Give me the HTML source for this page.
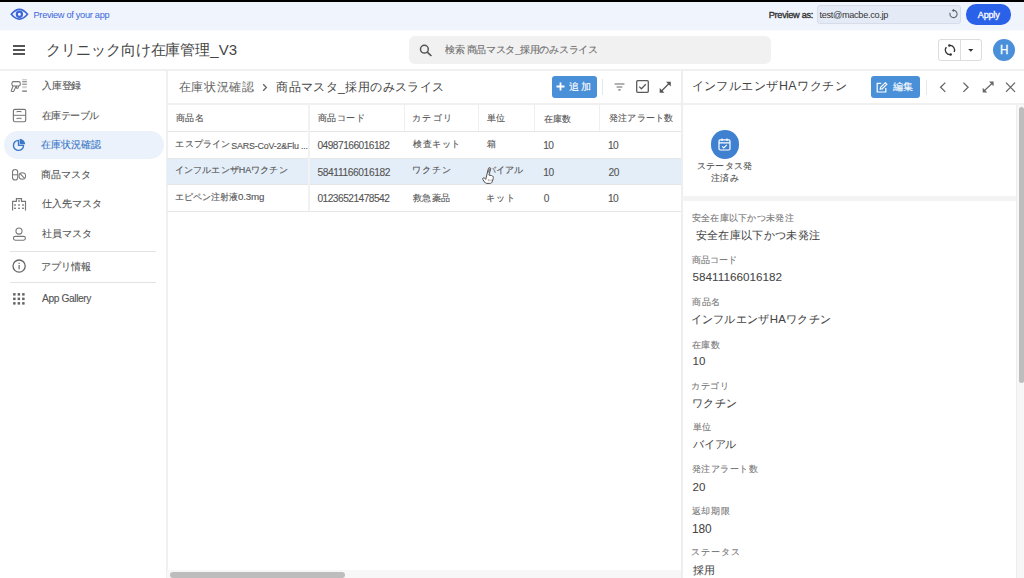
<!DOCTYPE html>
<html><head><meta charset="utf-8">
<style>
*{box-sizing:border-box;margin:0;padding:0}
html,body{width:1024px;height:578px;overflow:hidden;background:#fff;font-family:"Liberation Sans",sans-serif;color:#444}
.a{position:absolute;white-space:nowrap}
.t{position:absolute;white-space:nowrap;line-height:1.25}
.vl{position:absolute;width:1px;background:#efefef}
.hl{position:absolute;left:167px;width:514px;height:1px;background:#e6e6e6}
</style></head><body>
<!-- top preview bar -->
<div class="a" style="left:0;top:0;width:1024px;height:2px;background:#000"></div>
<div class="a" style="left:0;top:2px;width:1024px;height:28px;background:#eff4fd"></div><div class="a" style="left:0;top:30px;width:1024px;height:1px;background:#f8fafe"></div>
<svg class="a" style="left:10px;top:7.5px" width="19" height="13" viewBox="0 0 19 13"><path d="M1.3 6.3 Q9.4 -3.4 17.5 6.3 Q9.4 16 1.3 6.3 Z" fill="none" stroke="#3d66d9" stroke-width="1.75" stroke-linejoin="round"/><circle cx="9.4" cy="6.3" r="2.6" fill="none" stroke="#3d66d9" stroke-width="2.2"/></svg>
<div class="a" style="left:817px;top:5px;width:144px;height:19px;background:#e5ebf6;border:1px solid #d6dce8;border-radius:3px"></div>
<svg class="a" style="left:948px;top:8px" width="11" height="11" viewBox="0 0 11 11"><path d="M5.5 2.4 A3.6 3.6 0 1 1 2.12 4.77" fill="none" stroke="#666" stroke-width="1.1"/><path d="M3.6 2.4 L6 0.7 L6 4.1Z" fill="#666"/></svg>
<div class="a" style="left:966px;top:4px;width:45px;height:20.5px;background:#2962e8;border-radius:10px"></div>

<!-- app header -->
<div class="a" style="left:0;top:69px;width:1024px;height:2px;background:#f0f0f0"></div>
<div class="a" style="left:13px;top:45px;width:12px;height:1.6px;background:#555"></div>
<div class="a" style="left:13px;top:49px;width:12px;height:1.6px;background:#555"></div>
<div class="a" style="left:13px;top:53px;width:12px;height:1.6px;background:#555"></div>
<div class="a" style="left:409px;top:35.8px;width:362px;height:28.2px;background:#f1f1f1;border-radius:6px"></div>
<svg class="a" style="left:419px;top:44px" width="14" height="13" viewBox="0 0 14 13"><circle cx="5.4" cy="5.2" r="3.9" fill="none" stroke="#555" stroke-width="1.5"/><path d="M8.3 8.1 L12.4 12" stroke="#555" stroke-width="1.7"/></svg>
<div class="a" style="left:938px;top:39px;width:44px;height:22px;border:1px solid #dcdcdc;border-radius:3px"></div>
<div class="a" style="left:960px;top:39px;width:1px;height:22px;background:#dcdcdc"></div>
<svg class="a" style="left:942.5px;top:42.8px" width="14" height="14" viewBox="0 0 14 14"><path d="M6.36 2.44 A4.6 4.6 0 0 1 11.13 9.02" fill="none" stroke="#333" stroke-width="1.3"/><path d="M7.64 11.56 A4.6 4.6 0 0 1 3.33 4.23" fill="none" stroke="#333" stroke-width="1.3"/><circle cx="6.36" cy="2.44" r="1.25" fill="#333"/><circle cx="7.64" cy="11.56" r="1.25" fill="#333"/></svg>
<svg class="a" style="left:968px;top:48.8px" width="6" height="3" viewBox="0 0 6 3"><path d="M0.2 0 L5.4 0 L2.8 2.8Z" fill="#333"/></svg>
<div class="a" style="left:993.2px;top:38.8px;width:22.3px;height:22.3px;border-radius:50%;background:#4a8fd9"></div><div class="a" style="left:993.2px;top:38.9px;width:22.3px;height:22.3px;color:#fff;font-size:12.6px;text-align:center;line-height:22.3px;transform:scaleX(0.92);-webkit-text-stroke:0.3px #fff">H</div>

<!-- sidebar -->
<div class="a" style="left:166px;top:71px;width:2px;height:507px;background:#f0f0f0"></div>
<div class="a" style="left:4px;top:131.3px;width:160px;height:27.6px;border-radius:14px;background:#ebf2fb"></div>
<div class="a" style="left:10px;top:251px;width:146px;height:1px;background:#e3e3e3"></div>
<div class="a" style="left:10px;top:282px;width:146px;height:1px;background:#e3e3e3"></div>
<svg class="a" style="left:8px;top:76px" width="22" height="20" viewBox="0 0 22 20"><rect x="3.9" y="5.6" width="8.4" height="4.4" rx="1.7" fill="none" stroke="#777" stroke-width="1.1"/><path d="M5.1 10 L3.3 14.5 Q3.1 15.4 4 15.4 L5.6 15.4 L8.2 10 M8.4 10 V12 Q8.4 12.3 8.7 12.3 L10 12.3 L10.6 10" fill="none" stroke="#777" stroke-width="1.05" stroke-linejoin="round"/><g fill="#777"><rect x="14.2" y="3.1" width="4.7" height="0.9" opacity=".4"/><rect x="14.2" y="4.8" width="4.7" height="1.3" opacity=".75"/><rect x="14.2" y="6.6" width="4.7" height="0.8" opacity=".55"/><rect x="14.2" y="7.9" width="4.7" height="0.8"/><rect x="14.2" y="10" width="4.7" height="0.7" opacity=".4"/><rect x="14.2" y="11.3" width="4.7" height="0.8" opacity=".45"/><rect x="14.2" y="14.5" width="4.7" height="1.3"/></g></svg>
<svg class="a" style="left:8px;top:104px" width="22" height="22" viewBox="0 0 22 22"><rect x="5.4" y="5.4" width="12.3" height="12.3" rx="1.4" fill="none" stroke="#777" stroke-width="1.15"/><path d="M5.4 11.3 H17.7 M8.9 8.3 V7.5 H13.1 V8.3 M8.9 15.1 V14.3 H13.1 V15.1" fill="none" stroke="#777" stroke-width="1"/></svg>
<svg class="a" style="left:8px;top:134px" width="22" height="22" viewBox="0 0 22 22"><path d="M10.5 6.4 A5 5 0 1 0 15.5 11.4 L10.5 11.4 Z" fill="none" stroke="#3b78c8" stroke-width="1.4" stroke-linejoin="round"/><path d="M11.7 4.8 A5.5 5.5 0 0 1 17.2 10.3 L11.7 10.3 Z" fill="#3b78c8"/></svg>
<svg class="a" style="left:8px;top:164px" width="22" height="22" viewBox="0 0 22 22"><rect x="4.5" y="5.5" width="5.2" height="10.5" rx="2.6" fill="none" stroke="#777" stroke-width="1.05"/><path d="M4.5 10.8 H9.7" stroke="#777" stroke-width="1"/><circle cx="14.3" cy="12" r="3.3" fill="none" stroke="#777" stroke-width="1.05"/><path d="M12 9.7 L16.6 14.3" stroke="#777" stroke-width="1.05"/></svg>
<svg class="a" style="left:8px;top:194px" width="22" height="22" viewBox="0 0 22 22"><path d="M4.6 16.6 V7.4 H8.4 V4.6 H13.5 V7.4 H17.5 V16.6" fill="none" stroke="#777" stroke-width="1.15"/><g fill="#777"><rect x="6.1" y="10.3" width="1.8" height="1.4"/><rect x="10.1" y="10.3" width="1.8" height="1.4"/><rect x="14.1" y="10.3" width="1.8" height="1.4"/><rect x="6.1" y="13.6" width="1.8" height="1.4"/><rect x="10.1" y="13.6" width="1.8" height="1.4"/><rect x="14.1" y="13.6" width="1.8" height="1.4"/><rect x="10.1" y="6.3" width="1.8" height="1.4"/></g></svg>
<svg class="a" style="left:8px;top:222px" width="22" height="22" viewBox="0 0 22 22"><circle cx="11" cy="9.1" r="3.05" fill="none" stroke="#777" stroke-width="1.1"/><rect x="5.4" y="14.4" width="12" height="3.8" rx="1.9" fill="none" stroke="#777" stroke-width="1.1"/></svg>
<svg class="a" style="left:8px;top:255px" width="22" height="22" viewBox="0 0 22 22"><circle cx="11.1" cy="11.1" r="6.1" fill="none" stroke="#666" stroke-width="1.3"/><rect x="10.5" y="10" width="1.2" height="4.3" fill="#666"/><rect x="10.5" y="7.7" width="1.2" height="1.2" fill="#666"/></svg>
<svg class="a" style="left:8px;top:288px" width="22" height="22" viewBox="0 0 22 22"><g fill="#666"><rect x="5.1" y="5.1" width="2.5" height="2.5"/><rect x="9.6" y="5.1" width="2.5" height="2.5"/><rect x="14.1" y="5.1" width="2.5" height="2.5"/><rect x="5.1" y="9.6" width="2.5" height="2.5"/><rect x="9.6" y="9.6" width="2.5" height="2.5"/><rect x="14.1" y="9.6" width="2.5" height="2.5"/><rect x="5.1" y="14.1" width="2.5" height="2.5"/><rect x="9.6" y="14.1" width="2.5" height="2.5"/><rect x="14.1" y="14.1" width="2.5" height="2.5"/></g></svg>

<!-- table area -->
<svg class="a" style="left:262px;top:83px" width="6" height="9" viewBox="0 0 6 9"><path d="M1.2 1.3 L4.4 4.5 L1.2 7.7" fill="none" stroke="#666" stroke-width="1.3"/></svg>
<div class="a" style="left:552px;top:75.5px;width:44.5px;height:22.5px;background:#4a90d9;border-radius:3px"></div>
<svg class="a" style="left:556px;top:82px" width="9" height="9" viewBox="0 0 9 9"><path d="M4.5 0.5 V8.5 M0.5 4.5 H8.5" stroke="#fff" stroke-width="1.8"/></svg>
<div class="a" style="left:602px;top:79px;width:1px;height:16px;background:#e8e8e8"></div>
<svg class="a" style="left:614px;top:83px" width="11" height="8" viewBox="0 0 11 8"><path d="M0.6 1 H10.4 M2.6 4 H8.4 M4.4 6.8 H6.6" stroke="#666" stroke-width="1.15"/></svg>
<svg class="a" style="left:635.5px;top:80.3px" width="13" height="13" viewBox="0 0 13 13"><rect x="0.7" y="0.7" width="11.6" height="11.6" rx="1" fill="none" stroke="#5a5a5a" stroke-width="1.3"/><path d="M3.2 6.6 L5.4 8.8 L9.8 4.3" fill="none" stroke="#5a5a5a" stroke-width="1.3"/></svg>
<svg class="a" style="left:658.5px;top:80.5px" width="12.5" height="12.5" viewBox="0 0 12.5 12.5"><path d="M2 10.5 L10.5 2" stroke="#555" stroke-width="1.3"/><path d="M7 0.7 H11.8 V5.5Z M0.7 7 V11.8 H5.5Z" fill="#555"/></svg>
<div class="hl" style="top:103px;height:2px;background:#f0f0f0"></div>
<div class="hl" style="top:131px"></div>
<div class="a" style="left:167px;top:158px;width:514px;height:27px;background:#e4eef8"></div>
<div class="hl" style="top:158px"></div>
<div class="hl" style="top:184px"></div>
<div class="hl" style="top:211px"></div>
<div class="vl" style="left:308px;top:104px;width:2px;height:107px;background:#f2f2f2"></div>
<div class="vl" style="left:404px;top:104px;height:27px"></div>
<div class="vl" style="left:478px;top:104px;height:27px"></div>
<div class="vl" style="left:534px;top:104px;height:27px"></div>
<div class="vl" style="left:599px;top:104px;height:27px"></div>
<div class="a" style="left:167px;top:570px;width:514px;height:8px;background:#f7f7f7"></div>
<div class="a" style="left:170px;top:572px;width:175px;height:6px;background:#bdbdbd;border-radius:3px"></div>

<svg class="a" style="left:481.5px;top:166.5px" width="13" height="17" viewBox="0 0 13 17"><path d="M7.6 0.6 C8.6 0.6 8.9 1.4 8.6 2.3 L6.9 8.1 L9.6 8.6 C11.1 8.9 11.5 10 11.2 11.5 L10.4 14.4 C10 15.8 9 16.4 7.8 16.4 L4.8 16.4 C3.8 16.4 3.1 15.9 2.5 15 L0.9 12.6 C0.4 11.9 0.7 11 1.5 10.9 C2.1 10.8 2.7 11.2 3.1 11.7 L3.7 12.4 L6.4 1.6 C6.6 0.9 7 0.6 7.6 0.6 Z" fill="#fff" stroke="#444" stroke-width="0.95" stroke-linejoin="round"/><path d="M6.2 12 L6.6 14.3 M7.8 12.3 L8.1 14.3 M9.3 12.5 L9.5 14.2" stroke="#888" stroke-width="0.6"/></svg>
<!-- detail panel -->
<div class="a" style="left:681px;top:71px;width:2px;height:507px;background:#eeeeee"></div>
<div class="a" style="left:871px;top:75.5px;width:48.5px;height:22.5px;background:#4a90d9;border-radius:3px"></div>
<svg class="a" style="left:876px;top:81.5px" width="12" height="11" viewBox="0 0 12 11"><path d="M5.2 1.3 H1.2 V10 H9.8 V6" fill="none" stroke="#fff" stroke-width="1.2"/><path d="M4.2 7.2 L4.6 5.3 L9.3 0.7 L10.9 2.2 L6.1 6.9Z" fill="none" stroke="#fff" stroke-width="1.1"/></svg>
<div class="a" style="left:926px;top:79.5px;width:1px;height:15.5px;background:#e8e8e8"></div>
<svg class="a" style="left:939px;top:82px" width="8" height="10.5" viewBox="0 0 8 10.5"><path d="M6.3 0.6 L1.6 5.25 L6.3 9.9" fill="none" stroke="#666" stroke-width="1.3"/></svg>
<svg class="a" style="left:961.5px;top:82px" width="8" height="10.5" viewBox="0 0 8 10.5"><path d="M1.4 0.6 L6.1 5.25 L1.4 9.9" fill="none" stroke="#666" stroke-width="1.3"/></svg>
<svg class="a" style="left:981.5px;top:81px" width="12.5" height="12" viewBox="0 0 12.5 12"><path d="M2 10 L10.5 2" stroke="#666" stroke-width="1.25"/><path d="M7 0.6 H11.6 V5.2Z M0.7 6.8 V11.4 H5.3Z" fill="#666"/></svg>
<svg class="a" style="left:1004.5px;top:82px" width="11" height="10.5" viewBox="0 0 11 10.5"><path d="M1 0.6 L10 9.9 M10 0.6 L1 9.9" fill="none" stroke="#666" stroke-width="1.3"/></svg>
<div class="a" style="left:683px;top:103px;width:341px;height:2px;background:#f0f0f0"></div>
<div class="a" style="left:710.5px;top:130px;width:28.5px;height:28.5px;border-radius:50%;background:#3f80d0"></div>
<svg class="a" style="left:717px;top:137px" width="15" height="15" viewBox="0 0 15 15"><rect x="2" y="2.8" width="11" height="10.2" rx="1.2" fill="none" stroke="#fff" stroke-width="1.2"/><path d="M2 5.8 H13 M5 1.5 V4 M10 1.5 V4" stroke="#fff" stroke-width="1.2"/><path d="M5.2 9.3 L6.8 10.9 L9.8 7.9" fill="none" stroke="#fff" stroke-width="1.2"/></svg>
<div class="a" style="left:682px;top:195.5px;width:335px;height:5px;background:#f3f3f3"></div>
<div class="a" style="left:1016px;top:105px;width:8px;height:473px;background:#f7f7f7;border-left:1px solid #ededed"></div>
<div class="a" style="left:1018.8px;top:106.5px;width:5.5px;height:276.5px;background:#bdbdbd;border-radius:3px"></div>

<div id="pv" class="t" style="left:33.52px;top:9.60px;font-size:9.22px;color:#3d66d9;letter-spacing:-0.300px">Preview of your app</div>
<div id="pas" class="t" style="left:768.70px;top:9.60px;font-size:9.23px;color:#333;letter-spacing:-0.300px;-webkit-text-stroke:0.35px currentColor">Preview as:</div>
<div id="email" class="t" style="left:819.40px;top:9.60px;font-size:9.17px;color:#333;letter-spacing:-0.300px">test@macbe.co.jp</div>
<div id="apply" class="t" style="left:977.82px;top:9.58px;font-size:9.07px;color:#fff;letter-spacing:-0.200px;-webkit-text-stroke:0.3px currentColor">Apply</div>
<div id="title" class="t" style="left:45.84px;top:41.12px;font-size:15.00px;color:#444;letter-spacing:-0.042px">クリニック向け在庫管理_V3</div>
<div id="srch" class="t" style="left:444.96px;top:44.00px;font-size:9.60px;color:#6e6e6e;letter-spacing:-0.317px;-webkit-text-stroke:0.12px currentColor">検索 商品マスタ_採用のみスライス</div>
<div id="s1" class="t" style="left:42.00px;top:79.52px;font-size:9.60px;color:#555;letter-spacing:-0.207px;-webkit-text-stroke:0.12px currentColor">入庫登録</div>
<div id="s2" class="t" style="left:42.00px;top:109.52px;font-size:9.60px;color:#555;letter-spacing:-0.580px;-webkit-text-stroke:0.12px currentColor">在庫テーブル</div>
<div id="s3" class="t" style="left:41.40px;top:139.00px;font-size:9.60px;color:#3b78c8;letter-spacing:-0.132px;-webkit-text-stroke:0.12px currentColor">在庫状況確認</div>
<div id="s4" class="t" style="left:41.40px;top:169.24px;font-size:9.60px;color:#555;letter-spacing:0.015px;-webkit-text-stroke:0.12px currentColor">商品マスタ</div>
<div id="s5" class="t" style="left:42.00px;top:198.00px;font-size:9.60px;color:#555;letter-spacing:-0.020px;-webkit-text-stroke:0.12px currentColor">仕入先マスタ</div>
<div id="s6" class="t" style="left:42.00px;top:228.00px;font-size:9.60px;color:#555;letter-spacing:-0.125px;-webkit-text-stroke:0.12px currentColor">社員マスタ</div>
<div id="s7" class="t" style="left:41.40px;top:261.12px;font-size:9.60px;color:#555;letter-spacing:-0.160px;-webkit-text-stroke:0.12px currentColor">アプリ情報</div>
<div id="s8" class="t" style="left:42.00px;top:293.00px;font-size:10.20px;color:#555;letter-spacing:-0.377px;-webkit-text-stroke:0.12px currentColor">App Gallery</div>
<div id="tt1" class="t" style="left:178.50px;top:79.70px;font-size:12.40px;color:#666;letter-spacing:0.690px">在庫状況確認</div>
<div id="tt2" class="t" style="left:276.20px;top:79.70px;font-size:12.40px;color:#444;letter-spacing:0.383px">商品マスタ_採用のみスライス</div>
<div id="add" class="t" style="left:569.10px;top:81.24px;font-size:10.00px;color:#fff;letter-spacing:1.620px;-webkit-text-stroke:0.12px currentColor">追加</div>
<div id="h1" class="t" style="left:176.00px;top:112.00px;font-size:9.40px;color:#555;letter-spacing:0.280px;-webkit-text-stroke:0.12px currentColor">商品名</div>
<div id="h2" class="t" style="left:317.96px;top:111.64px;font-size:9.40px;color:#555;letter-spacing:0.490px;-webkit-text-stroke:0.12px currentColor">商品コード</div>
<div id="h3" class="t" style="left:412.18px;top:111.64px;font-size:9.40px;color:#555;letter-spacing:1.167px;-webkit-text-stroke:0.12px currentColor">カテゴリ</div>
<div id="h4" class="t" style="left:486.96px;top:111.52px;font-size:9.40px;color:#555;letter-spacing:0.280px;-webkit-text-stroke:0.12px currentColor">単位</div>
<div id="h5" class="t" style="left:543.82px;top:112.76px;font-size:9.40px;color:#555;letter-spacing:0.120px;-webkit-text-stroke:0.12px currentColor">在庫数</div>
<div id="h6" class="t" style="left:608.96px;top:111.52px;font-size:9.40px;color:#555;letter-spacing:0.190px;-webkit-text-stroke:0.12px currentColor">発注アラート数</div>
<div id="r1a" class="t" style="left:175.30px;top:139.00px;font-size:9.00px;color:#555;letter-spacing:0.216px;-webkit-text-stroke:0.12px currentColor">エスプライン</div>
<div id="r1g" class="t" style="left:231.24px;top:140.82px;font-size:8.91px;color:#555;letter-spacing:-0.200px;-webkit-text-stroke:0.12px currentColor">SARS-CoV-2&amp;Flu ...</div>
<div id="r1b" class="t" style="left:317.48px;top:139.98px;font-size:10.20px;color:#555;letter-spacing:-0.532px;-webkit-text-stroke:0.12px currentColor">04987166016182</div>
<div id="r1c" class="t" style="left:413.30px;top:139.00px;font-size:9.00px;color:#555;letter-spacing:0.550px;-webkit-text-stroke:0.12px currentColor">検査キット</div>
<div id="r1d" class="t" style="left:486.96px;top:139.00px;font-size:9.00px;color:#555;letter-spacing:0.000px;-webkit-text-stroke:0.12px currentColor">箱</div>
<div id="r1e" class="t" style="left:543.18px;top:139.98px;font-size:10.20px;color:#555;letter-spacing:-0.532px;-webkit-text-stroke:0.12px currentColor">10</div>
<div id="r1f" class="t" style="left:607.88px;top:139.98px;font-size:10.20px;color:#555;letter-spacing:-0.532px;-webkit-text-stroke:0.12px currentColor">10</div>
<div id="r2a" class="t" style="left:175.18px;top:165.00px;font-size:9.00px;color:#555;letter-spacing:0.073px;-webkit-text-stroke:0.12px currentColor">インフルエンザHAワクチン</div>
<div id="r2b" class="t" style="left:317.48px;top:166.50px;font-size:10.20px;color:#555;letter-spacing:-0.371px;-webkit-text-stroke:0.12px currentColor">58411166016182</div>
<div id="r2c" class="t" style="left:412.18px;top:165.00px;font-size:9.00px;color:#555;letter-spacing:0.980px;-webkit-text-stroke:0.12px currentColor">ワクチン</div>
<div id="r2d" class="t" style="left:487.24px;top:165.00px;font-size:9.00px;color:#555;letter-spacing:0.063px;-webkit-text-stroke:0.12px currentColor">バイアル</div>
<div id="r2e" class="t" style="left:543.18px;top:166.50px;font-size:10.20px;color:#555;letter-spacing:-0.371px;-webkit-text-stroke:0.12px currentColor">10</div>
<div id="r2f" class="t" style="left:608.48px;top:166.50px;font-size:10.20px;color:#555;letter-spacing:-0.371px;-webkit-text-stroke:0.12px currentColor">20</div>
<div id="r3a" class="t" style="left:175.30px;top:192.00px;font-size:9.00px;color:#555;letter-spacing:-0.027px;-webkit-text-stroke:0.12px currentColor">エピペン注射液</div>
<div id="r3g" class="t" style="left:238.12px;top:191.00px;font-size:9.78px;color:#555;letter-spacing:-0.200px;-webkit-text-stroke:0.12px currentColor">0.3mg</div>
<div id="r3b" class="t" style="left:317.48px;top:192.50px;font-size:10.20px;color:#555;letter-spacing:-0.532px;-webkit-text-stroke:0.12px currentColor">01236521478542</div>
<div id="r3c" class="t" style="left:413.30px;top:193.00px;font-size:9.00px;color:#555;letter-spacing:0.153px;-webkit-text-stroke:0.12px currentColor">救急薬品</div>
<div id="r3d" class="t" style="left:486.36px;top:193.00px;font-size:9.00px;color:#555;letter-spacing:0.910px;-webkit-text-stroke:0.12px currentColor">キット</div>
<div id="r3e" class="t" style="left:543.82px;top:192.50px;font-size:10.20px;color:#555;letter-spacing:-0.532px;-webkit-text-stroke:0.12px currentColor">0</div>
<div id="r3f" class="t" style="left:607.88px;top:192.50px;font-size:10.20px;color:#555;letter-spacing:-0.532px;-webkit-text-stroke:0.12px currentColor">10</div>
<div id="dt" class="t" style="left:691.50px;top:79.00px;font-size:12.40px;color:#444;letter-spacing:0.490px">インフルエンザHAワクチン</div>
<div id="edit" class="t" style="left:892.70px;top:81.20px;font-size:10.00px;color:#fff;letter-spacing:0.375px;-webkit-text-stroke:0.12px currentColor">編集</div>
<div id="st1" class="t" style="left:697.00px;top:160.00px;font-size:9.40px;color:#555;letter-spacing:0.224px;-webkit-text-stroke:0.12px currentColor">ステータス発</div>
<div id="st2" class="t" style="left:710.64px;top:172.00px;font-size:9.40px;color:#555;letter-spacing:0.805px;-webkit-text-stroke:0.12px currentColor">注済み</div>
<div id="l1" class="t" style="left:691.84px;top:213.20px;font-size:9.20px;color:#7a7a7a;letter-spacing:0.277px;-webkit-text-stroke:0.12px currentColor">安全在庫以下かつ未発注</div>
<div id="v1" class="t" style="left:695.82px;top:228.00px;font-size:11.40px;color:#444;letter-spacing:0.308px;-webkit-text-stroke:0.05px currentColor">安全在庫以下かつ未発注</div>
<div id="l2" class="t" style="left:691.84px;top:254.66px;font-size:9.20px;color:#7a7a7a;letter-spacing:0.000px;-webkit-text-stroke:0.12px currentColor">商品コード</div>
<div id="v2" class="t" style="left:692.60px;top:270.24px;font-size:11.71px;color:#444;-webkit-text-stroke:0.05px currentColor">58411166016182</div>
<div id="l3" class="t" style="left:691.84px;top:296.76px;font-size:9.20px;color:#7a7a7a;letter-spacing:0.750px;-webkit-text-stroke:0.12px currentColor">商品名</div>
<div id="v3" class="t" style="left:690.64px;top:312.00px;font-size:11.40px;color:#444;letter-spacing:0.289px;-webkit-text-stroke:0.05px currentColor">インフルエンザHAワクチン</div>
<div id="l4" class="t" style="left:691.84px;top:339.88px;font-size:9.20px;color:#7a7a7a;letter-spacing:0.400px;-webkit-text-stroke:0.12px currentColor">在庫数</div>
<div id="v4" class="t" style="left:692.60px;top:353.58px;font-size:11.60px;color:#444;-webkit-text-stroke:0.05px currentColor">10</div>
<div id="l5" class="t" style="left:690.82px;top:380.64px;font-size:9.20px;color:#7a7a7a;letter-spacing:0.737px;-webkit-text-stroke:0.12px currentColor">カテゴリ</div>
<div id="v5" class="t" style="left:691.70px;top:395.58px;font-size:11.40px;color:#444;letter-spacing:0.540px;-webkit-text-stroke:0.05px currentColor">ワクチン</div>
<div id="l6" class="t" style="left:692.90px;top:422.24px;font-size:9.20px;color:#7a7a7a;letter-spacing:-0.360px;-webkit-text-stroke:0.12px currentColor">単位</div>
<div id="v6" class="t" style="left:692.90px;top:436.66px;font-size:11.40px;color:#444;letter-spacing:-0.160px;-webkit-text-stroke:0.05px currentColor">バイアル</div>
<div id="l7" class="t" style="left:691.76px;top:464.00px;font-size:9.20px;color:#7a7a7a;letter-spacing:0.515px;-webkit-text-stroke:0.12px currentColor">発注アラート数</div>
<div id="v7" class="t" style="left:692.48px;top:479.58px;font-size:11.60px;color:#444;-webkit-text-stroke:0.05px currentColor">20</div>
<div id="l8" class="t" style="left:691.76px;top:505.64px;font-size:9.20px;color:#7a7a7a;letter-spacing:0.737px;-webkit-text-stroke:0.12px currentColor">返却期限</div>
<div id="v8" class="t" style="left:691.88px;top:521.92px;font-size:11.87px;color:#444;-webkit-text-stroke:0.05px currentColor">180</div>
<div id="l9" class="t" style="left:690.80px;top:546.88px;font-size:9.20px;color:#7a7a7a;letter-spacing:0.970px;-webkit-text-stroke:0.12px currentColor">ステータス</div>
<div id="v9" class="t" style="left:692.96px;top:563.02px;font-size:11.40px;color:#444;letter-spacing:0.200px;-webkit-text-stroke:0.05px currentColor">採用</div>
</body></html>
